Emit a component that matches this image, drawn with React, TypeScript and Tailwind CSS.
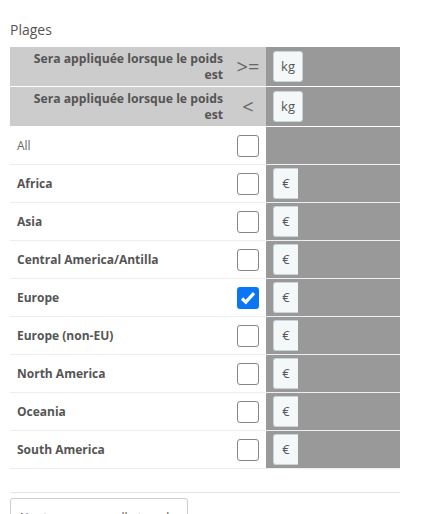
import React from "react";

const zones = [
  "Africa",
  "Asia",
  "Central America/Antilla",
  "Europe",
  "Europe (non-EU)",
  "North America",
  "Oceania",
  "South America",
];

function Box({ checked }: { checked?: boolean }) {
  if (checked) {
    return (
      <span className="flex h-[22px] w-[22px] items-center justify-center rounded-[3px] bg-[#0a75f5]">
        <svg width="18" height="18" viewBox="0 0 18 18">
          <path d="M3 9.5l3.8 3.6L15 4.2" fill="none" stroke="#fff" strokeWidth="3.2" />
        </svg>
      </span>
    );
  }
  return <span className="block h-[22px] w-[22px] rounded-[3px] border-[1.5px] border-[#858585] bg-white" />;
}

function Addon({ txt, wide }: { txt: string; wide?: boolean }) {
  return (
    <span
      className={`flex h-[31px] items-center justify-center rounded-l-[3px] border border-[#c7d6db] bg-[#f5f8f9] text-[13px] text-[#555] ${
        wide ? "w-[30px] rounded-r-[3px]" : "w-[25px] border-r-0"
      }`}
    >
      {txt}
    </span>
  );
}

export default function App() {
  return (
    <div className="h-[514px] overflow-hidden bg-white px-[10px] pt-[20px] font-['Open_Sans',sans-serif] text-[#555]">
      <div className="font-['Liberation_Sans_Narrow','Open_Sans',sans-serif] text-[14px] leading-[20px] text-[#555]">
        Plages
      </div>

      <div className="mt-[7px] w-[390px]">
        {[">=", "<"].map((op) => (
          <div key={op} className="flex h-[40px] border-b border-white bg-[#ccc]">
            <div className="flex w-[220px] items-center justify-end pr-[7px] text-right text-[12.2px] font-bold leading-[16px] text-[#555]">
              <span className="pl-[16px]">Sera appliquée lorsque le poids est</span>
            </div>
            <div className="flex w-[36px] items-center justify-center text-[20px] leading-none text-[#666]">{op}</div>
            <div className="flex flex-1 items-center bg-[#999] pl-[7px]">
              <Addon txt="kg" wide />
            </div>
          </div>
        ))}

        <div className="flex h-[38px] border-b border-[#eee]">
          <div className="flex w-[220px] items-center pl-[7px] text-[12px] text-[#666]">All</div>
          <div className="flex w-[36px] items-center justify-center">
            <Box />
          </div>
          <div className="flex-1 bg-[#999]" />
        </div>

        {zones.map((z) => (
          <div key={z} className="flex h-[38px] border-b border-[#eee]">
            <div className="flex w-[220px] items-center pl-[7px] text-[12px] font-bold text-[#555]">{z}</div>
            <div className="flex w-[36px] items-center justify-center">
              <Box checked={z === "Europe"} />
            </div>
            <div className="flex flex-1 items-center bg-[#999] pl-[7px]">
              <Addon txt="€" />
            </div>
          </div>
        ))}
      </div>

      <div className="mt-[23px] w-[390px] border-t border-[#e5e5e5]" />

      <button className="mt-[5px] block h-[32px] w-[178px] rounded-[3px] border border-[#ccc] bg-white px-[7px] pt-[7px] text-left text-[12px] leading-[18px] whitespace-nowrap text-[#555]">
        Ajouter une nouvelle tranche
      </button>
    </div>
  );
}
